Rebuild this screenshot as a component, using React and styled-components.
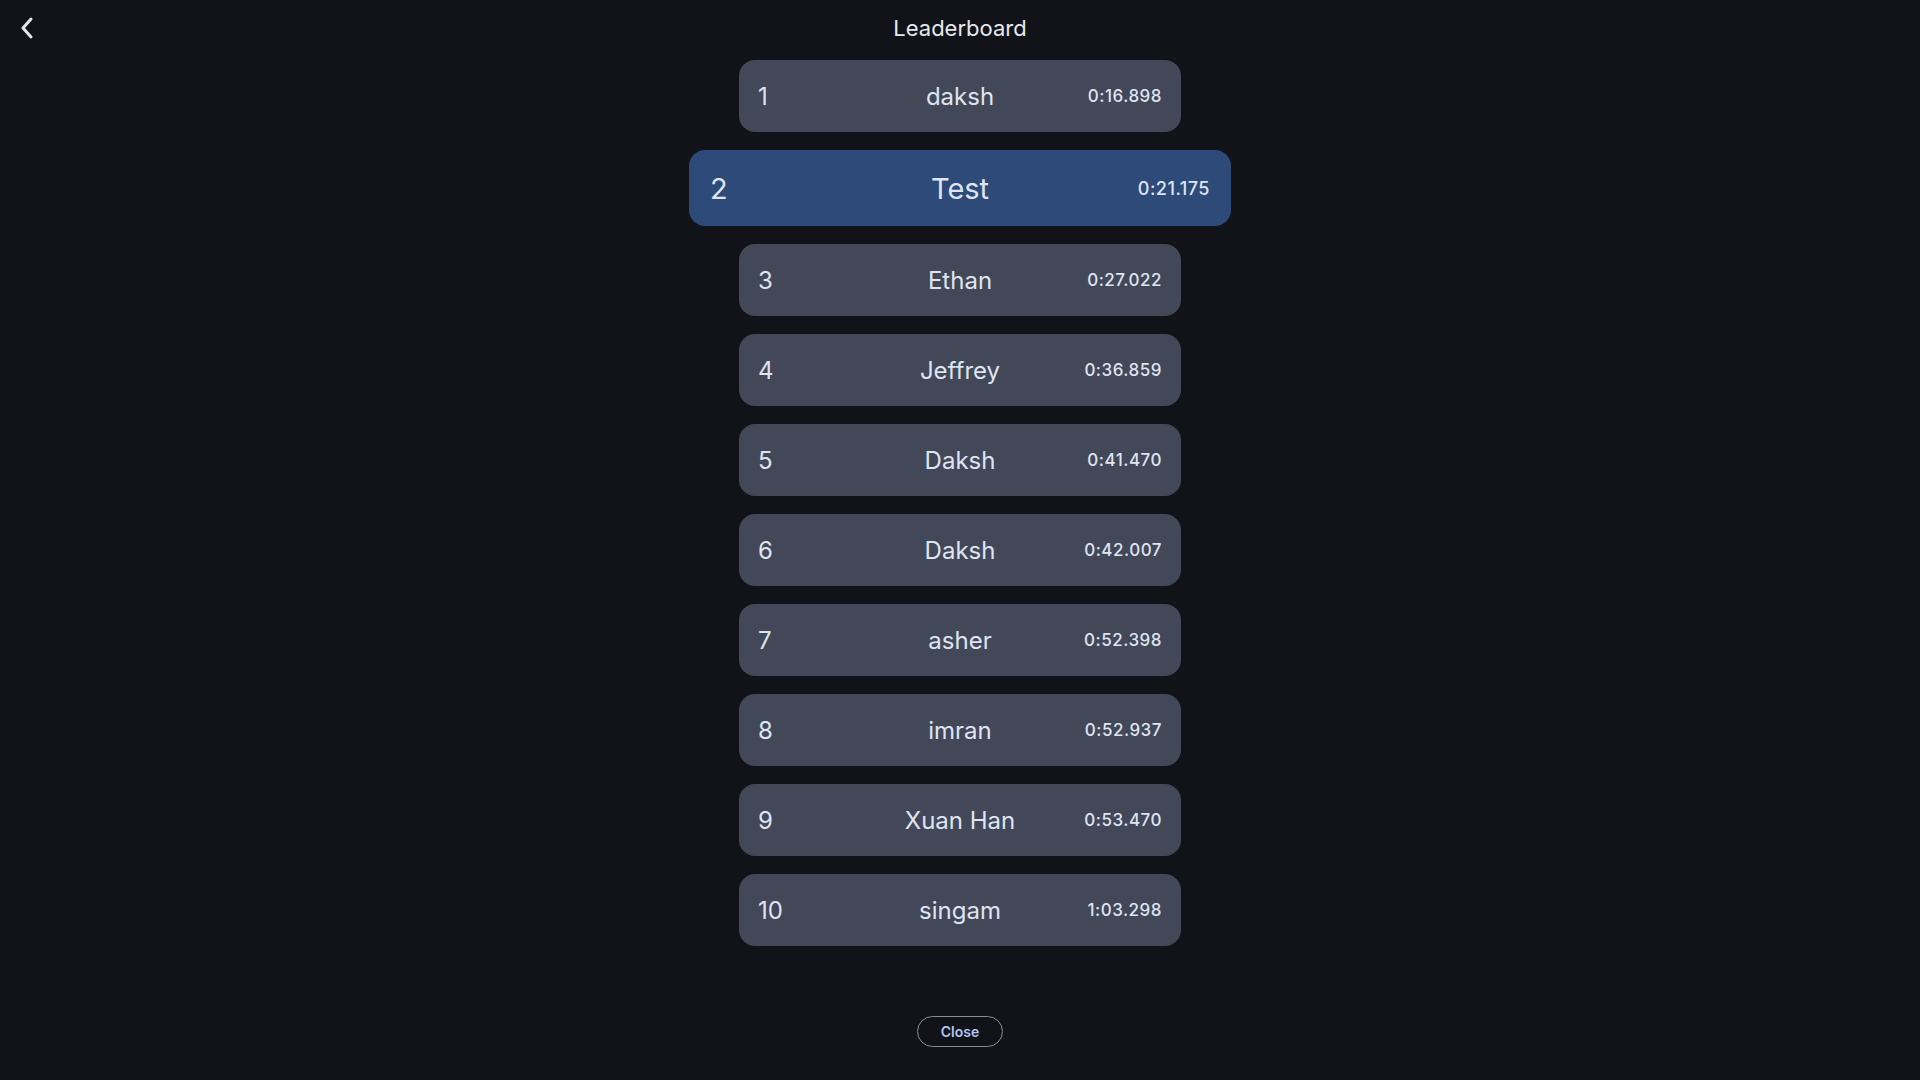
import React from "react";
import styled, { createGlobalStyle } from "styled-components";

const GlobalStyle = createGlobalStyle`
  html, body {
    margin: 0;
    padding: 0;
    background: #121318;
  }
  body {
    font-family: Inter, "Noto Sans", sans-serif;
    color: #dfe4f0;
  }
`;

const Page = styled.div`
  min-height: 1080px;
  display: flex;
  flex-direction: column;
  align-items: center;
  background: #121318;
`;

const Header = styled.header`
  width: 100%;
  height: 56px;
  display: grid;
  grid-template-columns: 1fr auto 1fr;
  align-items: center;
  padding: 0 16px;
  box-sizing: border-box;
`;

const BackButton = styled.button`
  justify-self: start;
  background: none;
  border: none;
  padding: 0 4px;
  display: flex;
  align-items: center;
  cursor: pointer;
  color: #e4e6ec;
`;

const Title = styled.h1`
  margin: 0;
  font-size: 22px;
  font-weight: 400;
  color: #e6e8ee;
`;

const List = styled.ol`
  list-style: none;
  margin: 4px 0 0;
  padding: 0;
  display: flex;
  flex-direction: column;
  align-items: center;
  gap: 18px;
`;

const Row = styled.li`
  width: ${(p) => (p.$me ? "542px" : "442px")};
  height: ${(p) => (p.$me ? "76px" : "72px")};
  box-sizing: border-box;
  padding: 0 ${(p) => (p.$me ? "21px" : "19px")};
  display: grid;
  grid-template-columns: 1fr auto 1fr;
  align-items: center;
  border-radius: 16px;
  background: ${(p) => (p.$me ? "#2d4a78" : "#424858")};
  color: #dfe4f2;
`;

const Rank = styled.span`
  justify-self: start;
  font-size: ${(p) => (p.$me ? "29px" : "24px")};
`;

const Name = styled.span`
  font-size: ${(p) => (p.$me ? "29px" : "24px")};
`;

const Time = styled.span`
  justify-self: end;
  font-size: ${(p) => (p.$me ? "18px" : "17px")};
  font-weight: 500;
  letter-spacing: 0.5px;
`;

const CloseButton = styled.button`
  margin-top: 70px;
  width: 86px;
  height: 31px;
  border-radius: 16px;
  border: 1px solid #8a8d96;
  background: transparent;
  color: #aec6f4;
  font-family: Inter, "Noto Sans", sans-serif;
  font-size: 14px;
  font-weight: 600;
  cursor: pointer;
`;

const scores = [
  { name: "daksh", time: "0:16.898" },
  { name: "Test", time: "0:21.175", me: true },
  { name: "Ethan", time: "0:27.022" },
  { name: "Jeffrey", time: "0:36.859" },
  { name: "Daksh", time: "0:41.470" },
  { name: "Daksh", time: "0:42.007" },
  { name: "asher", time: "0:52.398" },
  { name: "imran", time: "0:52.937" },
  { name: "Xuan Han", time: "0:53.470" },
  { name: "singam", time: "1:03.298" },
];

export default function App() {
  return (
    <>
      <GlobalStyle />
      <Page>
        <Header>
          <BackButton aria-label="Back">
            <svg width="14" height="22" viewBox="0 0 14 22" fill="none">
              <path
                d="M11 2 L3 11 L11 20"
                stroke="currentColor"
                strokeWidth="3"
                strokeLinecap="round"
                strokeLinejoin="round"
              />
            </svg>
          </BackButton>
          <Title>Leaderboard</Title>
          <span />
        </Header>
        <List>
          {scores.map((s, i) => (
            <Row key={i} $me={s.me}>
              <Rank $me={s.me}>{i + 1}</Rank>
              <Name $me={s.me}>{s.name}</Name>
              <Time $me={s.me}>{s.time}</Time>
            </Row>
          ))}
        </List>
        <CloseButton>Close</CloseButton>
      </Page>
    </>
  );
}
